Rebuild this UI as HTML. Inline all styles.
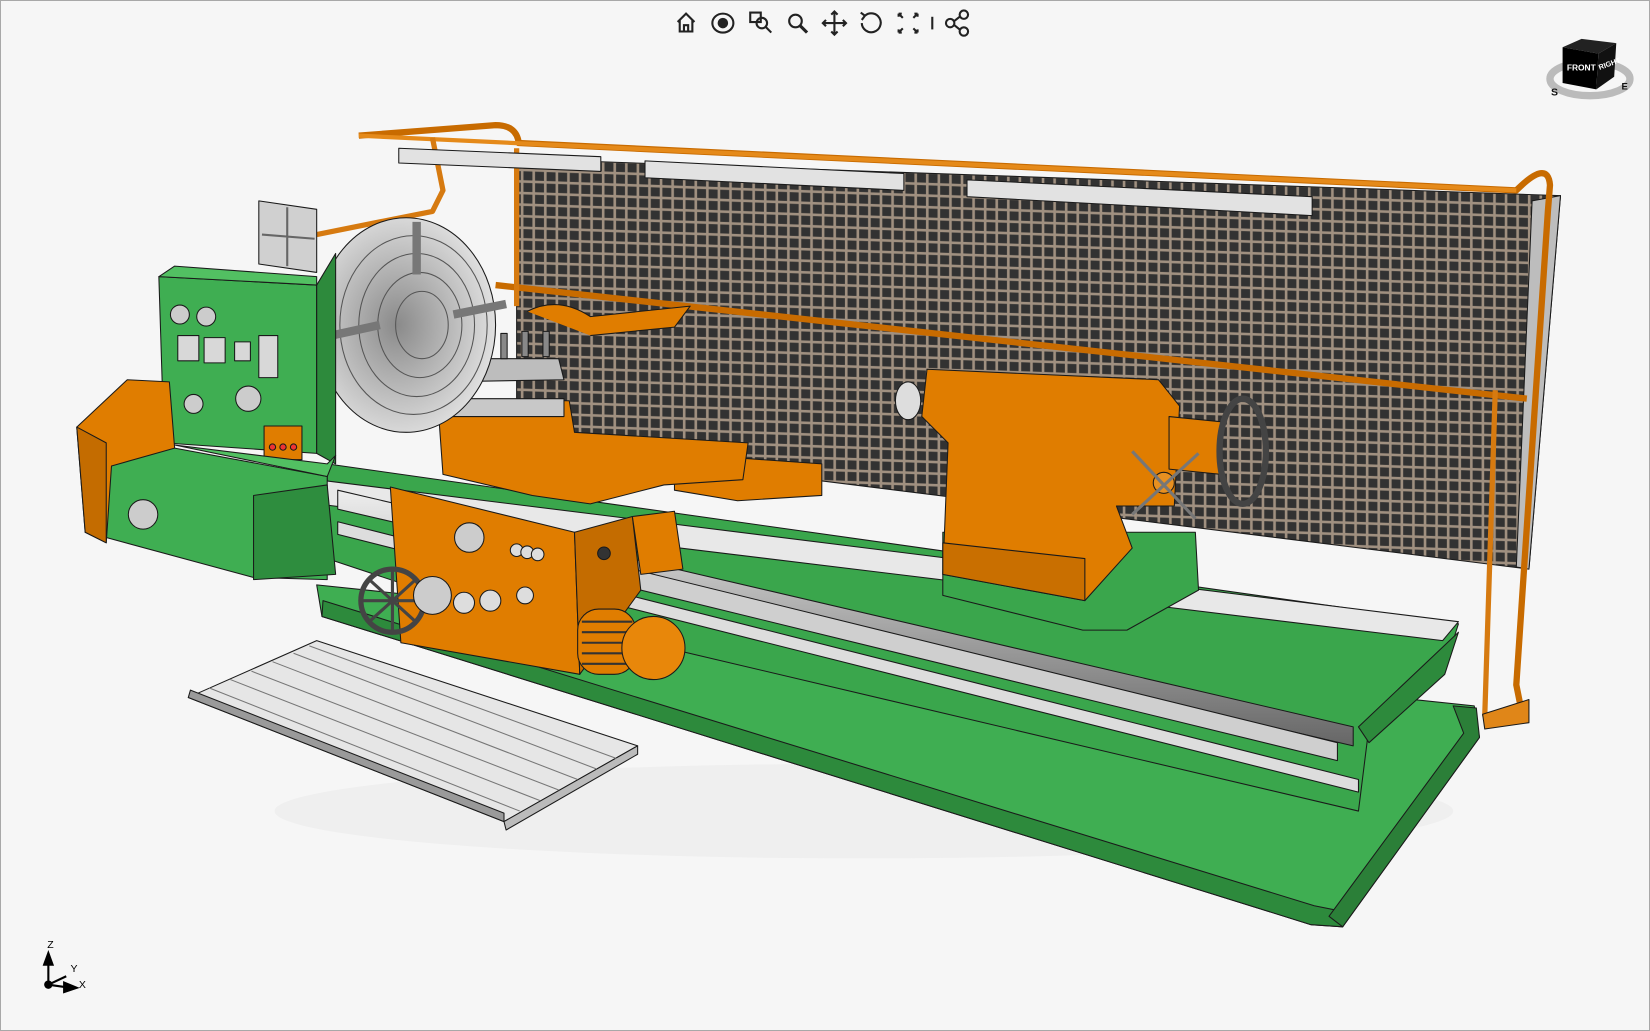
<!DOCTYPE html>
<html><head><meta charset="utf-8"><style>
html,body{margin:0;padding:0;background:#f5f5f5;}
.wrap{position:relative;width:1650px;height:1031px;overflow:hidden;background:#f6f6f6;box-sizing:border-box;border:1px solid #a8a8a8;}
svg{position:absolute;left:0;top:0;}
text{font-family:"Liberation Sans",sans-serif;}
</style></head><body><div class="wrap">
<svg width="1650" height="1031" viewBox="0 0 1568 980" preserveAspectRatio="none">
<defs>
<pattern id="mesh" width="11" height="11" patternUnits="userSpaceOnUse" patternTransform="skewY(2)">
<rect width="11" height="11" fill="#a09080"/>
<rect x="1.5" y="1.5" width="8.5" height="8.5" fill="#323232"/>
</pattern>
<radialGradient id="chuck" cx="0.45" cy="0.5" r="0.55"><stop offset="0" stop-color="#8a8a8a"/><stop offset="1" stop-color="#e0e0e0"/></radialGradient>
<linearGradient id="screw" x1="0" y1="0" x2="0" y2="1"><stop offset="0" stop-color="#eee"/><stop offset="0.5" stop-color="#aaa"/><stop offset="1" stop-color="#666"/></linearGradient>
</defs>
<g stroke="#1a1a1a" stroke-width="1" stroke-linejoin="round">
<ellipse cx="820" cy="770" rx="560" ry="45" fill="#efefef" stroke="none"/>
<!-- mesh backsplash -->
<polygon points="490,150 1482,185 1452,540 490,420" fill="url(#mesh)"/>
<polygon points="1455,190 1482,185 1452,540 1440,538" fill="#bdbdbd"/>
<path d="M340,128 L470,118 Q490,118 492,135 L1440,180 Q1470,150 1472,175 L1470,200 L1440,650 L1445,675" fill="none" stroke="#c86b00" stroke-width="6"/>
<path d="M340,128 L1440,180" fill="none" stroke="#e58a1a" stroke-width="4"/>
<path d="M470,270 L1450,378" fill="none" stroke="#c86b00" stroke-width="6"/>
<path d="M490,140 L490,290 M1420,370 L1410,680" fill="none" stroke="#d67a10" stroke-width="5"/>
<polygon points="1408,678 1452,664 1452,686 1410,692" fill="#e08618"/>
<path d="M300,222 L410,200 L420,180 L410,130" fill="none" stroke="#d67a10" stroke-width="5"/>
<polygon points="378,140 570,148 570,162 378,154" fill="#e2e2e2"/>
<polygon points="612,152 858,164 858,180 612,168" fill="#e2e2e2"/>
<polygon points="918,170 1246,186 1246,204 918,186" fill="#e2e2e2"/>
<!-- rear guard orange -->
<path d="M500,295 Q530,280 560,300 L655,290 L640,310 L560,318" fill="#e07d00"/>
<!-- bed base -->
<polygon points="300,555 1400,670 1405,700 1275,880 1245,878 305,585" fill="#3fae52"/>
<polygon points="305,585 1245,878 1275,880 1278,866 1248,860 306,570" fill="#2d8a3c"/>
<polygon points="1380,670 1402,672 1405,700 1275,880 1262,870 1390,696" fill="#2b7f38"/>
<polygon points="310,440 1385,592 1370,640 1300,690 1290,770 400,560 310,530" fill="#3aa64c"/>
<polygon points="300,455 1385,590 1370,608 300,478" fill="#e8e8e8"/>
<polygon points="1290,690 1385,600 1372,640 1300,705" fill="#2d8a3c"/>
<polygon points="320,465 1285,690 1285,708 320,483" fill="url(#screw)"/>
<polygon points="320,495 1290,740 1290,752 320,507" fill="#ddd"/>
<polygon points="600,540 1270,705 1270,722 600,558" fill="#cfcfcf"/>
<!-- tailstock -->
<polygon points="895,505 1135,505 1138,560 1070,598 1028,598 895,565" fill="#3aa64c"/>
<polygon points="880,350 1100,360 1120,385 1115,480 1060,480 1075,520 1030,570 895,545 900,420 875,395" fill="#e07d00"/>
<polygon points="895,515 1030,530 1030,570 895,545" fill="#c96f00"/>
<ellipse cx="862" cy="380" rx="12" ry="18" fill="#ddd"/>
<polygon points="1110,395 1160,400 1160,450 1110,445" fill="#e07d00"/>
<ellipse cx="1180" cy="428" rx="22" ry="50" fill="none" stroke="#444" stroke-width="6"/>
<circle cx="1105" cy="458" r="10" fill="#e89020"/>
<path d="M1075,428 L1135,492 M1075,488 L1138,430" stroke="#777" stroke-width="3"/>
<!-- carriage -->
<polygon points="640,430 780,440 780,470 700,475 640,465" fill="#e07d00"/>
<polygon points="415,380 540,380 545,410 710,420 705,455 630,460 560,478 505,470 420,450" fill="#e07d00"/>
<polygon points="420,378 535,378 535,395 420,395" fill="#c8c8c8"/>
<polygon points="415,340 530,340 535,360 420,362" fill="#bdbdbd"/>
<g fill="#888">
<rect x="435" y="318" width="6" height="24"/><rect x="455" y="316" width="6" height="24"/><rect x="475" y="316" width="6" height="24"/><rect x="495" y="314" width="6" height="24"/><rect x="515" y="314" width="6" height="24"/>
</g>
<polygon points="370,462 545,505 550,640 380,610" fill="#e07d00"/>
<polygon points="545,505 600,490 608,560 550,640" fill="#c46c00"/>
<polygon points="600,490 640,485 648,540 608,545" fill="#e07d00"/>
<circle cx="372" cy="570" r="30" fill="none" stroke="#444" stroke-width="5"/>
<path d="M372,540 L372,600 M342,570 L402,570 M350,550 L394,590 M350,590 L394,550" stroke="#444" stroke-width="3"/>
<circle cx="410" cy="565" r="18" fill="#ccc"/>
<circle cx="445" cy="510" r="14" fill="#ccc"/>
<g fill="#ddd"><circle cx="490" cy="522" r="6"/><circle cx="500" cy="524" r="6"/><circle cx="510" cy="526" r="6"/><circle cx="440" cy="572" r="10"/><circle cx="465" cy="570" r="10"/><circle cx="498" cy="565" r="8"/></g>
<circle cx="573" cy="525" r="6" fill="#333"/>
<rect x="548" y="578" width="55" height="62" rx="20" fill="#e07d00"/>
<g stroke="#333" stroke-width="2"><path d="M552,590 L600,590 M552,600 L600,600 M552,610 L600,610 M552,620 L600,620 M552,630 L600,630"/></g>
<circle cx="620" cy="615" r="30" fill="#e8870a"/>
<!-- chuck -->
<ellipse cx="385" cy="308" rx="85" ry="102" fill="url(#chuck)"/>
<g fill="none" stroke="#555"><ellipse cx="392" cy="308" rx="70" ry="85"/><ellipse cx="395" cy="308" rx="55" ry="68"/><ellipse cx="398" cy="308" rx="40" ry="50"/><ellipse cx="400" cy="308" rx="25" ry="32"/></g>
<path d="M305,320 L360,308 M395,210 L395,260 M430,298 L480,288" stroke="#777" stroke-width="8"/>
<!-- headstock -->
<polygon points="150,262 300,270 300,430 155,420" fill="#3fae52"/>
<polygon points="300,270 318,240 318,440 300,430" fill="#2d8a3c"/>
<polygon points="150,262 165,252 300,262 300,270" fill="#52c062"/>
<polygon points="245,190 300,198 300,258 245,250" fill="#d0d0d0"/>
<path d="M272,196 L272,252 M248,222 L298,226" stroke="#666" stroke-width="2"/>
<g fill="#d8d8d8"><rect x="168" y="318" width="20" height="24"/><rect x="193" y="320" width="20" height="24"/><rect x="222" y="324" width="15" height="18"/><rect x="245" y="318" width="18" height="40"/></g>
<rect x="250" y="404" width="36" height="32" fill="#e07d00"/>
<g fill="#e33"><circle cx="258" cy="424" r="3"/><circle cx="268" cy="424" r="3"/><circle cx="278" cy="424" r="3"/></g>
<circle cx="235" cy="378" r="12" fill="#ccc"/><circle cx="183" cy="383" r="9" fill="#ccc"/><circle cx="170" cy="298" r="9" fill="#ccc"/><circle cx="195" cy="300" r="9" fill="#ccc"/>
<polygon points="100,420 165,425 310,452 310,550 240,548 100,510" fill="#3fae52"/>
<polygon points="165,422 310,440 318,432 310,452" fill="#52c062"/>
<polygon points="240,470 310,460 318,545 240,550" fill="#2e8d3e"/>
<circle cx="135" cy="488" r="14" fill="#ccc"/>
<polygon points="72,405 120,360 160,362 165,425 105,442 100,515 80,505" fill="#e07d00"/>
<polygon points="72,405 100,420 100,515 80,505" fill="#c46c00"/>
<!-- tray -->
<polygon points="178,662 300,608 605,708 478,780" fill="#e6e6e6"/>
<polygon points="178,662 478,780 478,772 180,655" fill="#9a9a9a"/>
<polygon points="478,780 605,708 605,716 480,788" fill="#bbb"/>
<g stroke="#777"><path d="M198,653 L493,770 M218,645 L512,760 M238,637 L530,750 M258,628 L548,740 M278,620 L566,730 M293,613 L585,720"/></g>
</g>
<!-- toolbar -->
<g fill="none" stroke="#222" stroke-width="2">
<path d="M643,20 L651,12 L659,20 M645,18 L645,29 L657,29 L657,18 M649,29 L649,23 L653,23 L653,29"/>
<ellipse cx="686" cy="21" rx="10" ry="9"/><circle cx="686" cy="21" r="4" fill="#222"/>
<rect x="712" y="11" width="10" height="9"/><circle cx="723" cy="21" r="5"/><path d="M727,25 L732,30"/>
<circle cx="755" cy="19" r="6"/><path d="M759,23 L766,30" stroke-width="3"/>
<path d="M792,10 L792,32 M781,21 L803,21 M789,13 L792,10 L795,13 M789,29 L792,32 L795,29 M784,18 L781,21 L784,24 M800,18 L803,21 L800,24"/>
<path d="M821,14 A9,9 0 1 1 818,21 M817,11 L821,14 L818,18"/>
<path d="M853,12 L857,16 M853,12 L853,15 M853,12 L856,12 M871,12 L867,16 M871,12 L871,15 M871,12 L868,12 M853,30 L857,26 M853,30 L853,27 M853,30 L856,30 M871,30 L867,26 M871,30 L871,27 M871,30 L868,30"/>
<path d="M885,15 L885,27"/>
<circle cx="902" cy="21" r="4"/><circle cx="915" cy="13" r="4"/><circle cx="915" cy="29" r="4"/><path d="M906,19 L911,15 M906,23 L911,27"/>
</g>
<!-- view cube -->
<ellipse cx="1510" cy="74" rx="38" ry="16" fill="none" stroke="#bbb" stroke-width="7"/>
<polygon points="1484,44 1502,36 1535,40 1518,50" fill="#222"/>
<polygon points="1484,44 1518,50 1516,84 1484,78" fill="#000"/>
<polygon points="1518,50 1535,40 1533,72 1516,84" fill="#111"/>
<text x="1488" y="66" font-size="8" font-weight="bold" fill="#fff">FRONT</text>
<text x="1518" y="65" font-size="7" font-weight="bold" fill="#fff" transform="rotate(-20 1520 62)">RIGHT</text>
<text x="1473" y="90" font-size="10" font-weight="bold" fill="#111">S</text>
<text x="1540" y="84" font-size="9" font-weight="bold" fill="#111">E</text>
<g stroke="#000" stroke-width="2" fill="#000">
<path d="M45,935 L45,912"/><polygon points="41,916 45,905 49,916"/>
<path d="M45,935 L62,927"/><path d="M45,935 L66,938"/>
<polygon points="60,933 72,938 60,942"/>
<circle cx="45" cy="935" r="3"/>
</g>
<text x="44" y="900" font-size="10" fill="#000">Z</text>
<text x="66" y="923" font-size="10" fill="#000">Y</text>
<text x="74" y="938" font-size="10" fill="#000">X</text>
</svg>
</div></body></html>
